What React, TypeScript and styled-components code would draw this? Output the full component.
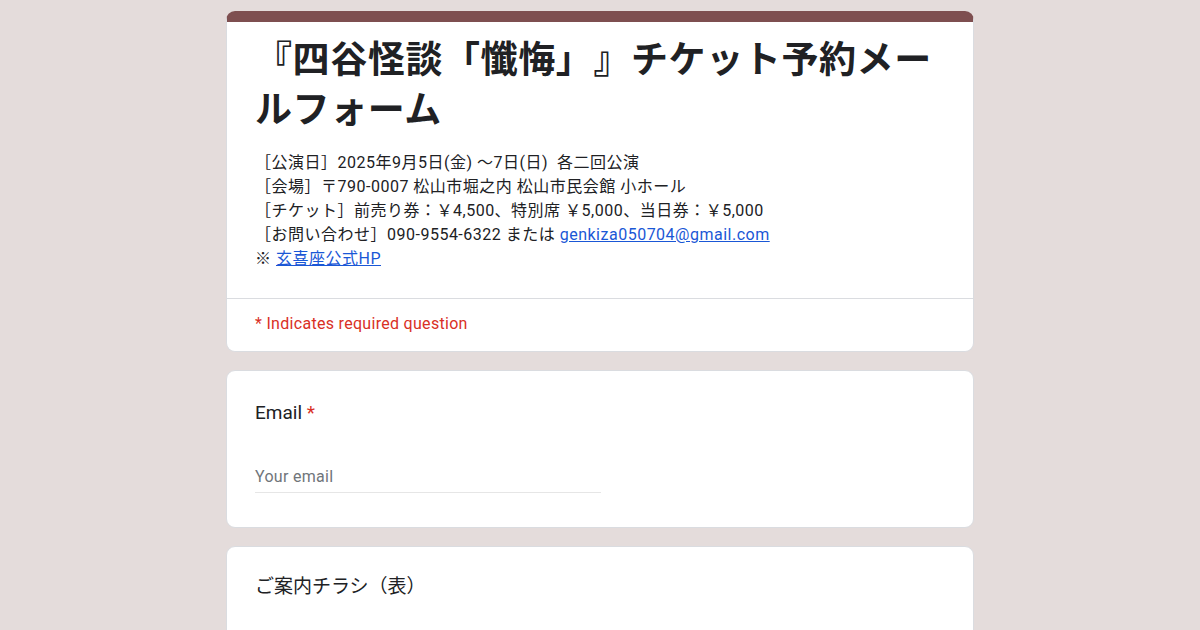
import * as React from "react";
import styled, { createGlobalStyle } from "styled-components";

const bg = "#e4dcdb";
const accent = "#7e4f50";
const red = "#d93025";
const text = "#202124";
const line = "#dadce0";

const GlobalStyle = createGlobalStyle`
  html, body {
    margin: 0;
    padding: 0;
    background: ${bg};
  }
  body {
    font-family: Roboto, "Noto Sans CJK JP", sans-serif;
    color: ${text};
    text-spacing-trim: space-all;
  }
`;

const Page = styled.div`
  display: flex;
  flex-direction: column;
  align-items: center;
  gap: 18px;
  padding-top: 11px;
  height: 630px;
  overflow: hidden;
  box-sizing: border-box;
`;

const Card = styled.div<{ $top?: boolean }>`
  width: 748px;
  box-sizing: border-box;
  background: #fff;
  border: 1px solid ${line};
  border-radius: 9px;
  overflow: hidden;
  flex-shrink: 0;
  ${({ $top }) => $top && `border-top: 11px solid ${accent};`}
`;

const Header = styled.div`
  padding: 14px 28px 27px;
  border-bottom: 1px solid ${line};
`;

const Title = styled.h1`
  margin: 0 0 15px;
  font-size: 37px;
  line-height: 50px;
  letter-spacing: 0.6px;
  font-weight: 700;
  color: ${text};
  font-family: Roboto, "Noto Sans CJK JP", sans-serif;
  text-spacing-trim: space-all;
`;

const Desc = styled.div`
  font-size: 16px;
  line-height: 24px;
  letter-spacing: 0.5px;
  color: ${text};
`;

const Link = styled.a`
  color: #1a57d6;
  text-decoration: underline;
`;

const Required = styled.div`
  padding: 13px 28px 15px;
  font-size: 16px;
  line-height: 24px;
  letter-spacing: 0.3px;
  color: ${red};
`;

const Question = styled.div<{ $pad?: string }>`
  padding: ${({ $pad }) => $pad || "30px 28px 34px"};
`;

const Label = styled.div`
  font-size: 19px;
  line-height: 24px;
  color: ${text};
`;

const Star = styled.span`
  color: ${red};
`;

const Input = styled.div`
  margin-top: 40px;
  width: 346px;
  font-size: 16px;
  line-height: 24px;
  letter-spacing: 0.3px;
  color: #70757a;
  padding-bottom: 3px;
  border-bottom: 1px solid #e6e6e6;
`;

export default function App() {
  return (
    <>
      <GlobalStyle />
      <Page>
        <Card $top>
          <Header>
            <Title>『四谷怪談「懺悔」』チケット予約メールフォーム</Title>
            <Desc>
              ［公演日］2025年9月5日(金) ～7日(日)&nbsp; 各二回公演
              <br />
              ［会場］〒790-0007 松山市堀之内 松山市民会館 小ホール
              <br />
              ［チケット］前売り券：￥4,500、特別席 ￥5,000、当日券：￥5,000
              <br />
              ［お問い合わせ］090-9554-6322 または{" "}
              <Link href="#">genkiza050704@gmail.com</Link>
              <br />
              ※ <Link href="#">玄喜座公式HP</Link>
            </Desc>
          </Header>
          <Required>* Indicates required question</Required>
        </Card>
        <Card>
          <Question>
            <Label>
              Email <Star>*</Star>
            </Label>
            <Input>Your email</Input>
          </Question>
        </Card>
        <Card>
          <Question $pad="28px 28px 60px">
            <Label>ご案内チラシ（表）</Label>
          </Question>
        </Card>
      </Page>
    </>
  );
}
